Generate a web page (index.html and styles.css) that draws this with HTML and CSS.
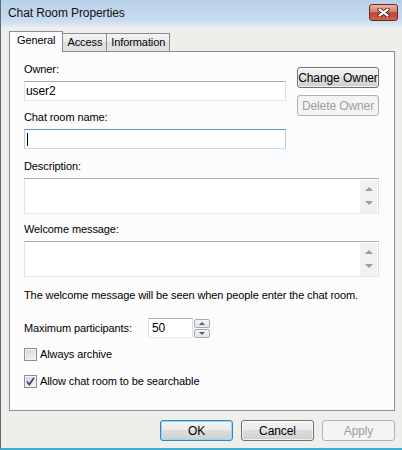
FILE: index.html
```html
<!DOCTYPE html>
<html lang="en">
<head>
    <meta charset="UTF-8">
    <title>Chat Room Properties</title>
    <link rel="stylesheet" href="styles.css">
</head>
<body>
    <div class="window">
        <div class="titlebar">
            <span class="title">Chat Room Properties</span>
            <button class="close-btn" aria-label="Close">
                <svg width="13" height="9" viewBox="0 0 13 9">
                    <path d="M2.5 1.5 L10.5 7.5 M10.5 1.5 L2.5 7.5" stroke="#3b1510" stroke-width="4" stroke-linecap="round"/>
                    <path d="M2.5 1.5 L10.5 7.5 M10.5 1.5 L2.5 7.5" stroke="#ffffff" stroke-width="2.2" stroke-linecap="round"/>
                </svg>
            </button>
        </div>

        <div class="client">
            <!-- tab strip -->
            <div class="tabs">
                <div class="tab active">General</div>
                <div class="tab">Access</div>
                <div class="tab">Information</div>
            </div>

            <div class="panel">
                <div class="owner-row">
                    <div class="owner-fields">
                        <label class="field-label">Owner:</label>
                        <div class="textbox">user2</div>
                        <label class="field-label spaced">Chat room name:</label>
                        <div class="textbox focused"><span class="caret"></span></div>
                    </div>
                    <div class="owner-buttons">
                        <button class="btn owner-btn">Change Owner</button>
                        <button class="btn owner-btn" disabled>Delete Owner</button>
                    </div>
                </div>

                <label class="field-label section">Description:</label>
                <div class="memo">
                    <div class="memo-text"></div>
                    <div class="memo-scroll"><span class="arrow-up"></span><span class="arrow-down"></span></div>
                </div>

                <label class="field-label section-tight">Welcome message:</label>
                <div class="memo">
                    <div class="memo-text"></div>
                    <div class="memo-scroll"><span class="arrow-up"></span><span class="arrow-down"></span></div>
                </div>

                <p class="note">The welcome message will be seen when people enter the chat room.</p>

                <div class="max-row">
                    <span class="max-label">Maximum participants:</span>
                    <div class="spin-box">50</div>
                    <div class="spin-buttons">
                        <span class="spin-btn"><span class="spin-up"></span></span>
                        <span class="spin-btn"><span class="spin-down"></span></span>
                    </div>
                </div>

                <div class="check-row first">
                    <span class="checkbox"></span>
                    <span>Always archive</span>
                </div>
                <div class="check-row">
                    <span class="checkbox">
                        <svg width="11" height="11" viewBox="0 0 11 11">
                            <path d="M2 5.5 L4.3 8.5 L9 1.8" fill="none" stroke="#2e4a80" stroke-width="1.7"/>
                        </svg>
                    </span>
                    <span>Allow chat room to be searchable</span>
                </div>
            </div>

            <div class="dialog-buttons">
                <button class="btn dialog-btn default">OK</button>
                <button class="btn dialog-btn">Cancel</button>
                <button class="btn dialog-btn" disabled>Apply</button>
            </div>
        </div>
    </div>
</body>
</html>
```

FILE: styles.css
```css
body {
    margin: 0;
    font-family: "Liberation Sans", Arial, sans-serif;
    font-size: 11px;
    letter-spacing: -0.1px;
    color: #000;
}
.window {
    width: 402px;
    height: 450px;
    box-sizing: border-box;
    display: flex;
    flex-direction: column;
    background-color: #eeefeb;
    border-left: 1px solid #5a6b7c;
    border-bottom: 2px solid #3cafd2;
}
.titlebar {
    height: 27px;
    display: flex;
    align-items: flex-start;
    padding-left: 7px;
    background: linear-gradient(#b9d0e9, #c8dbef 20px, #e3ebf3 27px);
}
.title {
    margin-top: 6px;
    line-height: 15px;
    font-size: 12px;
    color: #111;
}
.close-btn {
    margin-left: auto;
    margin-right: 4px;
    margin-top: 4px;
    width: 29px;
    height: 17px;
    padding: 0;
    border: 1px solid #6a2a20;
    border-radius: 3px;
    background: linear-gradient(#eab3a6, #d77a69 45%, #c2412f 52%, #cf6449);
    display: flex;
    align-items: center;
    justify-content: center;
}
.client {
    flex: 1;
    display: flex;
    flex-direction: column;
    padding: 4px 7px 7px 8px;
}
.tabs {
    display: flex;
    align-items: flex-end;
    height: 20px;
}
.tab {
    height: 18px;
    box-sizing: border-box;
    border: 1px solid #898c95;
    border-bottom: none;
    padding: 0 4px;
    line-height: 17px;
    background: linear-gradient(#f3f3f3, #ebebeb 50%, #dedede 50%, #e3e3e3);
    margin-left: -1px;
}
.tab.active {
    margin-left: 0;
    height: 21px;
    margin-bottom: -1px;
    padding: 0 7px;
    line-height: 17px;
    background: #fcfcfc;
    position: relative;
    z-index: 1;
}
.panel {
    flex: 1;
    border: 1px solid #898c95;
    background: #fcfcfc;
    padding: 10px 15px 0 14px;
}
.owner-row {
    display: flex;
    gap: 11px;
}
.owner-fields {
    width: 263px;
    display: flex;
    flex-direction: column;
}
.owner-buttons {
    display: flex;
    flex-direction: column;
    gap: 7px;
    padding-top: 5px;
}
.field-label {
    display: block;
    line-height: 15px;
    margin-bottom: 4px;
}
.field-label.spaced {
    margin-top: 9px;
}
.field-label.section {
    margin-top: 10px;
}
.field-label.section-tight {
    margin-top: 8px;
}
.textbox {
    height: 20px;
    box-sizing: border-box;
    border: 1px solid;
    border-color: #abadb3 #dbdfe6 #e3e9ef #e2e3ea;
    background: #fff;
    padding: 0 1px;
    display: flex;
    align-items: center;
    font-size: 12px;
}
.textbox.focused {
    border-color: #5d9bd6 #a9cdee #bcdcf4 #a9cdee;
}
.caret {
    width: 1px;
    height: 13px;
    margin-left: 1px;
    background: #000;
}
.memo {
    height: 36px;
    box-sizing: border-box;
    display: flex;
    border: 1px solid;
    border-color: #abadb3 #dbdfe6 #e3e9ef #e2e3ea;
    background: #fff;
}
.memo-text {
    flex: 1;
}
.memo-scroll {
    width: 17px;
    margin: 1px 1px 0 0;
    background: #f1f1ef;
    display: flex;
    flex-direction: column;
    align-items: center;
    justify-content: space-between;
    padding: 7px 0 8px;
    box-sizing: border-box;
}
.arrow-up {
    border-left: 4px solid transparent;
    border-right: 4px solid transparent;
    border-bottom: 4px solid #9d9aa8;
}
.arrow-down {
    border-left: 4px solid transparent;
    border-right: 4px solid transparent;
    border-top: 4px solid #9d9aa8;
}
.note {
    margin: 11px 0 0;
    line-height: 15px;
}
.max-row {
    display: flex;
    align-items: center;
    margin-top: 15px;
    height: 20px;
}
.max-label {
    width: 124px;
}
.spin-box {
    width: 45px;
    height: 20px;
    box-sizing: border-box;
    border: 1px solid;
    border-color: #abadb3 #dbdfe6 #e3e9ef #e2e3ea;
    background: #fff;
    padding-left: 3px;
    display: flex;
    align-items: center;
    font-size: 12px;
}
.spin-buttons {
    margin-left: 1px;
    display: flex;
    flex-direction: column;
    gap: 1px;
}
.spin-btn {
    width: 16px;
    height: 9px;
    box-sizing: border-box;
    border: 1px solid #a3abb5;
    border-radius: 2px;
    background: linear-gradient(#f4f4f4, #e2e4e7);
    display: flex;
    align-items: center;
    justify-content: center;
}
.spin-up {
    border-left: 3px solid transparent;
    border-right: 3px solid transparent;
    border-bottom: 3px solid #4d6185;
}
.spin-down {
    border-left: 3px solid transparent;
    border-right: 3px solid transparent;
    border-top: 3px solid #4d6185;
}
.check-row {
    display: flex;
    align-items: center;
    gap: 3px;
    line-height: 15px;
    margin-top: 12px;
}
.check-row.first {
    margin-top: 9px;
}
.checkbox {
    width: 13px;
    height: 13px;
    box-sizing: border-box;
    border: 1px solid #8e8f8f;
    background: linear-gradient(135deg, #d4d4d4, #f6f6f6);
    box-shadow: inset 0 0 0 1px #f2f2f2;
    display: flex;
    align-items: center;
    justify-content: center;
}
.btn {
    font: inherit;
    letter-spacing: inherit;
    color: #000;
    height: 21px;
    padding: 0;
    border: 1px solid #707070;
    border-radius: 3px;
    background: linear-gradient(#f2f2f2, #ebebeb 50%, #dddddd 50%, #cfcfcf);
    box-shadow: inset 0 0 0 1px rgba(255, 255, 255, 0.7);
}
.btn:disabled {
    color: #a0a0a0;
    border-color: #adb2b5;
    background: #f4f4f4;
    box-shadow: none;
}
.btn.default {
    border-color: #3c7fb1;
    box-shadow: inset 0 0 0 1px #8fdcf8;
}
.owner-btn {
    width: 82px;
    font-size: 12px;
}
.dialog-buttons {
    display: flex;
    justify-content: flex-end;
    gap: 8px;
    margin-top: 9px;
}
.dialog-btn {
    width: 73px;
    font-size: 12px;
}
```
